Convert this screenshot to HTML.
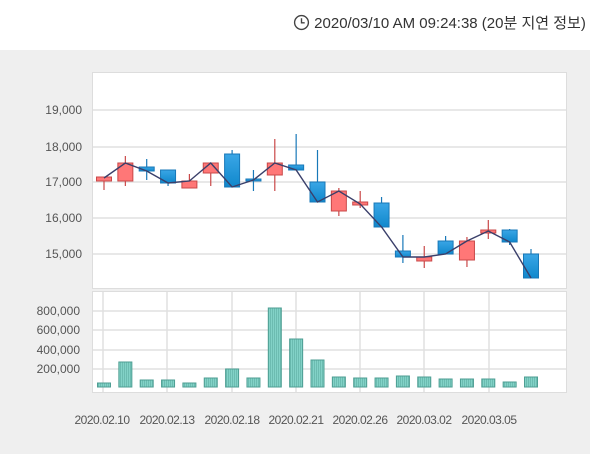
<!DOCTYPE html>
<html><head><meta charset="utf-8"><style>
body{margin:0;width:600px;height:454px;background:#fff;position:relative;overflow:hidden;font-family:"Liberation Sans","Noto Sans CJK KR",sans-serif;}
#gray{position:absolute;left:0;top:50px;width:590px;height:404px;background:#efefef;}
#hdr{position:absolute;left:293px;top:12px;font-size:15px;color:#333;white-space:nowrap;letter-spacing:0}
svg{position:absolute;left:0;top:0}
</style></head><body>
<div id="gray"></div>
<div id="hdr"><svg width="17" height="17" style="position:relative;display:inline-block;vertical-align:-3px;left:0;top:0" viewBox="0 0 16 16"><circle cx="8" cy="8" r="6.5" fill="none" stroke="#444" stroke-width="1.3"/><path d="M8 4v4.3h3" fill="none" stroke="#444" stroke-width="1.3"/></svg> 2020/03/10 AM 09:24:38 (20분 지연 정보)</div>
<svg width="600" height="454" font-family="Liberation Sans, sans-serif" font-size="12" fill="#555">
<defs>
<pattern id="st" width="2" height="4" patternUnits="userSpaceOnUse"><rect width="2" height="4" fill="#82d2c7"/><rect width="1" height="4" fill="#6cbcb1"/></pattern>
<linearGradient id="bl" x1="0" x2="0" y1="0" y2="1"><stop offset="0" stop-color="#3aa6e6"/><stop offset="1" stop-color="#1088cc"/></linearGradient>
</defs>
<rect x="92.5" y="72.5" width="474" height="216" fill="#fff" stroke="#ddd"/>
<rect x="92.5" y="291.5" width="474" height="101" fill="#fff" stroke="#ddd"/>
<g stroke="#e0e0e0" stroke-width="1.5">
<line x1="93" x2="566" y1="110" y2="110"/><line x1="93" x2="566" y1="147" y2="147"/><line x1="93" x2="566" y1="182" y2="182"/><line x1="93" x2="566" y1="218" y2="218"/><line x1="93" x2="566" y1="254" y2="254"/>
<line x1="93" x2="566" y1="311" y2="311"/><line x1="93" x2="566" y1="330" y2="330"/><line x1="93" x2="566" y1="350" y2="350"/><line x1="93" x2="566" y1="369" y2="369"/>
<line x1="103" x2="103" y1="292" y2="392"/><line x1="167" x2="167" y1="292" y2="392"/><line x1="232" x2="232" y1="292" y2="392"/><line x1="296" x2="296" y1="292" y2="392"/><line x1="360" x2="360" y1="292" y2="392"/><line x1="424" x2="424" y1="292" y2="392"/><line x1="489" x2="489" y1="292" y2="392"/>
</g>
<g text-anchor="end">
<text x="82" y="114">19,000</text><text x="82" y="151">18,000</text><text x="82" y="186">17,000</text><text x="82" y="222">16,000</text><text x="82" y="258">15,000</text>
<text x="80" y="315">800,000</text><text x="80" y="334">600,000</text><text x="80" y="354">400,000</text><text x="80" y="373">200,000</text>
</g>
<g text-anchor="middle" letter-spacing="-0.5">
<text x="102" y="424">2020.02.10</text><text x="167" y="424">2020.02.13</text><text x="232" y="424">2020.02.18</text><text x="296" y="424">2020.02.21</text><text x="360" y="424">2020.02.26</text><text x="424" y="424">2020.03.02</text><text x="489" y="424">2020.03.05</text>
</g>
<g id="c"></g>
<g id="v"></g>
<polyline id="ln" fill="none" stroke="#3a3f6a" stroke-width="1.4"/>
</svg>
<script>
var d=[[177,181,177,190,1],[163,181,156,186,1],[167,171,159,180,0],[170,183,170,186,0],[181,188,174,188,1],[163,173,163,186,1],[154,187,150,187,0],[179,181,170,191,0],[163,175,139,191,1],[165,170,134,170,0],[182,202,150,202,0],[191,211,188,216,1],[202,205,191,208,1],[203,227,197,227,0],[251,257,235,263,0],[257,261,246,268,1],[241,254,236,254,0],[241,260,237,267,1],[230,233,220,239,1],[230,242,229,245,0],[254,278,249,278,0]];
var lc=[178,163,171,183,181,163,187,180,163,170,202,191,204,227,257,257,254,241,231,242,278];
var vt=[383,362,380,380,383,378,369,378,308,339,360,377,378,378,376,377,379,379,379,382,377];
var ns="http://www.w3.org/2000/svg",c=document.getElementById('c'),v=document.getElementById('v'),pts=[];
function el(p,t,a){var e=document.createElementNS(ns,t);for(var k in a)e.setAttribute(k,a[k]);p.appendChild(e);}
d.forEach(function(o,i){var x=104+21.35*i;var r=o[4];var sc=r?'#c94848':'#1878b8';
el(c,'line',{x1:x,x2:x,y1:o[2],y2:o[3],stroke:sc,'stroke-width':1.2});
el(c,'rect',{x:x-7.5,y:o[0],width:15,height:Math.max(o[1]-o[0],2),fill:r?'#f77':'url(#bl)',stroke:sc,'stroke-width':1});
pts.push(x+','+lc[i]);
el(v,'rect',{x:x-6.5,y:vt[i],width:13,height:387-vt[i],fill:'url(#st)',stroke:'#4e9e93','stroke-width':1});});
document.getElementById('ln').setAttribute('points',pts.join(' '));
</script>
</body></html>
